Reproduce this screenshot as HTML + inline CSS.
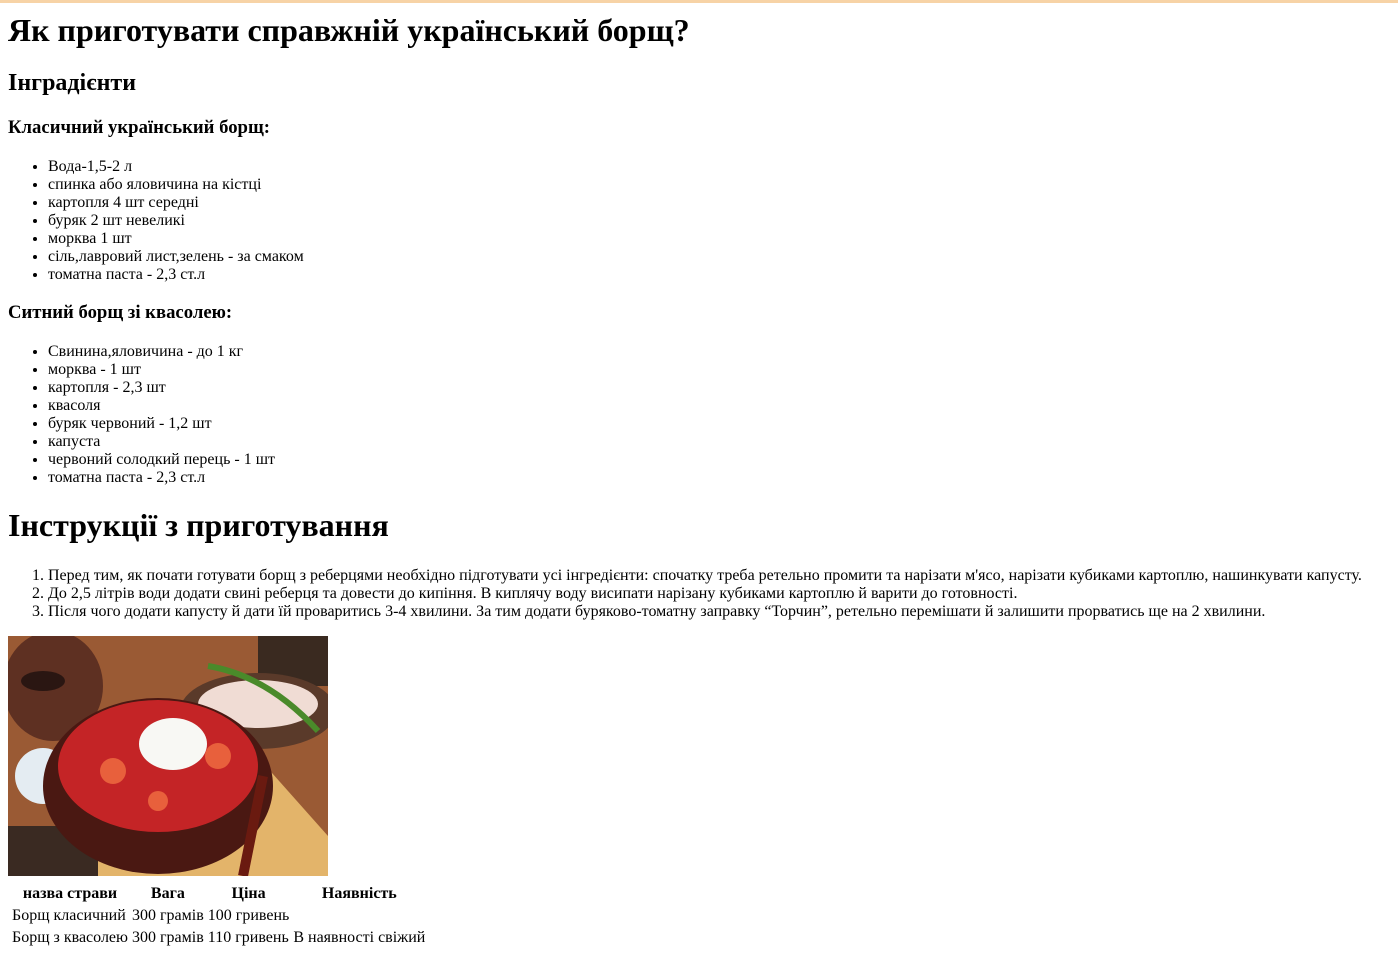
<!DOCTYPE html>
<html><head><meta charset="utf-8"><style>
html{border-top:3px solid #f7d3a6;}
body{margin:0 8px;font-family:"Liberation Serif",serif;font-size:16px;color:#000;background:#fff;}
h1{font-size:32px;line-height:37px;margin:9px 0 20px;}
h2{font-size:24px;line-height:28px;margin:0 0 20px;}
h3{font-size:18.72px;line-height:22px;margin:0 0 19px;}
ul,ol{margin:0 0 18px;padding-left:40px;line-height:18px;}
h1.b{margin:20px 0 23px;}
ol{margin-bottom:15px;}
.img{display:block;width:320px;height:240px;}
table{border-spacing:2px;margin-top:6px;margin-left:1px;}
th{font-weight:bold;padding:1px;line-height:18px;}
td{padding:1px;line-height:18px;}
</style></head><body>
<h1>Як приготувати справжній український борщ?</h1>
<h2>Інградієнти</h2>
<h3>Класичний український борщ:</h3>
<ul><li>Вода-1,5-2 л</li><li>спинка або яловичина на кістці</li><li>картопля 4 шт середні</li><li>буряк 2 шт невеликі</li><li>морква 1 шт</li><li>сіль,лавровий лист,зелень - за смаком</li><li>томатна паста - 2,3 ст.л</li></ul>
<h3>Ситний борщ зі квасолею:</h3>
<ul><li>Свинина,яловичина - до 1 кг</li><li>морква - 1 шт</li><li>картопля - 2,3 шт</li><li>квасоля</li><li>буряк червоний - 1,2 шт</li><li>капуста</li><li>червоний солодкий перець - 1 шт</li><li>томатна паста - 2,3 ст.л</li></ul>
<h1 class="b">Інструкції з приготування</h1>
<ol><li>Перед тим, як почати готувати борщ з реберцями необхідно підготувати усі інгредієнти: спочатку треба ретельно промити та нарізати м'ясо, нарізати кубиками картоплю, нашинкувати капусту.</li><li>До 2,5 літрів води додати свині реберця та довести до кипіння. В киплячу воду висипати нарізану кубиками картоплю й варити до готовності.</li><li>Після чого додати капусту й дати їй проваритись 3-4 хвилини. За тим додати буряково-томатну заправку “Торчин”, ретельно перемішати й залишити прорватись ще на 2 хвилини.</li></ol>
<svg class="img" viewBox="0 0 320 240">
<rect width="320" height="240" fill="#9a5a34"/>
<polygon points="40,150 240,110 320,200 320,240 60,240" fill="#e3b46a"/>
<rect x="250" y="0" width="70" height="50" fill="#3a2a20"/>
<ellipse cx="250" cy="75" rx="78" ry="38" fill="#5a3a2a"/>
<ellipse cx="250" cy="68" rx="60" ry="24" fill="#f0dcd4"/>
<path d="M200 30 Q260 40 310 95" stroke="#4a8a2a" stroke-width="6" fill="none"/>
<ellipse cx="45" cy="50" rx="50" ry="55" fill="#5e3022"/>
<ellipse cx="35" cy="45" rx="22" ry="10" fill="#2a1612"/>
<ellipse cx="35" cy="140" rx="28" ry="28" fill="#e4ecf2"/>
<rect x="0" y="190" width="90" height="50" fill="#3a2a22"/>
<ellipse cx="150" cy="150" rx="115" ry="88" fill="#4a1812"/>
<ellipse cx="150" cy="130" rx="100" ry="66" fill="#c42426"/>
<ellipse cx="165" cy="108" rx="34" ry="26" fill="#f8f8f4"/>
<circle cx="105" cy="135" r="13" fill="#e8603c"/>
<circle cx="210" cy="120" r="13" fill="#e8603c"/>
<circle cx="150" cy="165" r="10" fill="#e8603c"/>
<path d="M255 140 L235 240" stroke="#6a1a10" stroke-width="10"/>
</svg>
<table>
<tr><th>назва страви</th><th>Вага</th><th>Ціна</th><th>Наявність</th></tr>
<tr><td>Борщ класичний</td><td>300 грамів</td><td>100 гривень</td><td></td></tr>
<tr><td>Борщ з квасолею</td><td>300 грамів</td><td>110 гривень</td><td>В наявності свіжий</td></tr>
</table>
</body></html>
